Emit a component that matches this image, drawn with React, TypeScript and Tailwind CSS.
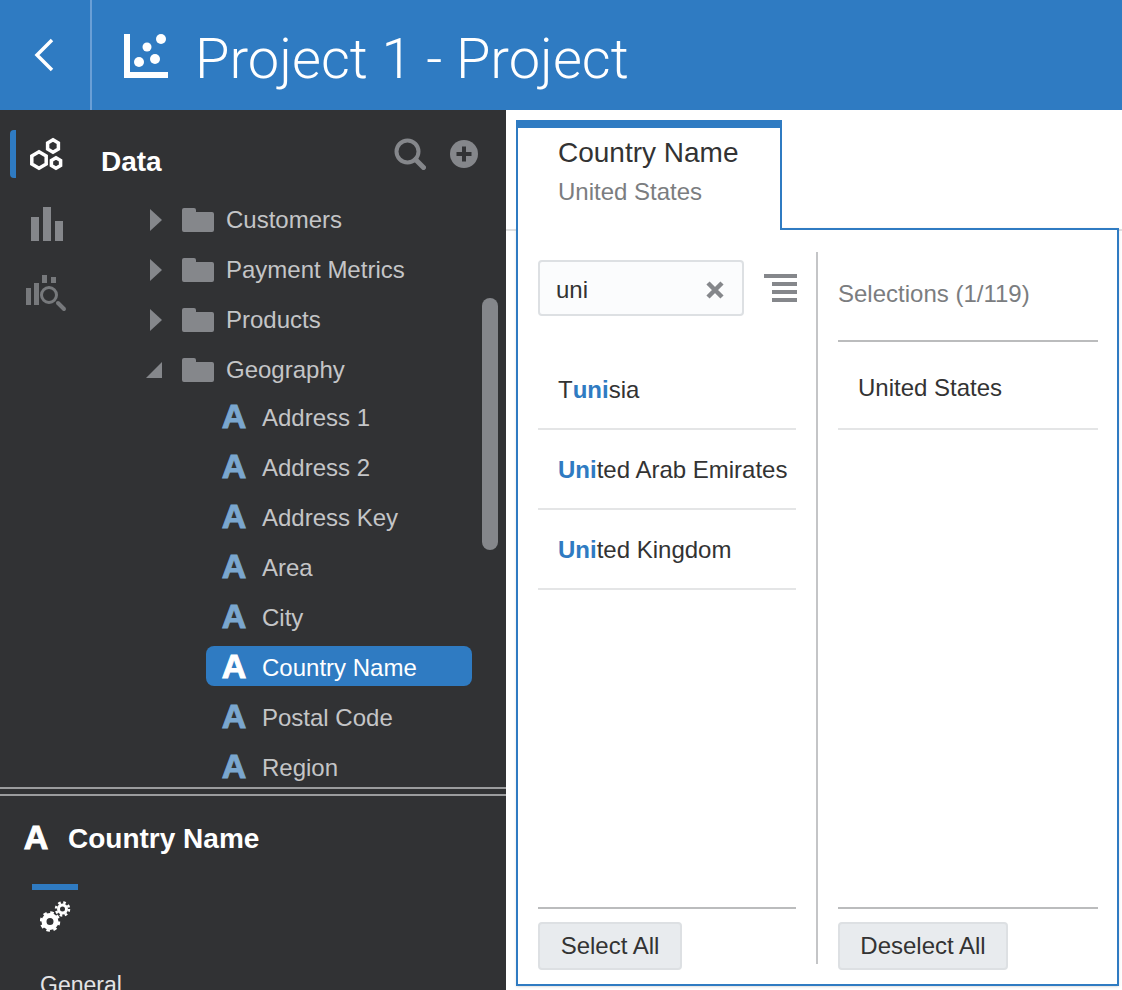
import React from 'react';

const folders = ['Customers', 'Payment Metrics', 'Products'];
const attributes = ['Address 1', 'Address 2', 'Address Key', 'Area', 'City', 'Country Name', 'Postal Code', 'Region'];

const Folder = () => (
  <svg width="32" height="24" viewBox="0 0 32 24" className="shrink-0">
    <path d="M2 0h10a2 2 0 0 1 2 2v2h16a2 2 0 0 1 2 2v16a2 2 0 0 1-2 2H2a2 2 0 0 1-2-2V2a2 2 0 0 1 2-2z" fill="#85878b" />
  </svg>
);

const AttrIcon = ({ className }: { className: string }) => (
  <span className={`-mt-1 w-[26px] shrink-0 text-center text-[34px] leading-none font-bold [-webkit-text-stroke:1px_currentColor] ${className}`}>A</span>
);

const Gear = ({ cx, cy, ring, width, teeth, dash }: { cx: number; cy: number; ring: number; width: number; teeth: number; dash: number }) => (
  <g fill="none" stroke="#fff">
    <circle cx={cx} cy={cy} r={ring} strokeWidth={width} />
    <circle cx={cx} cy={cy} r={teeth} strokeWidth={2.5} strokeDasharray={`${dash} ${dash}`} />
  </g>
);

const SelectRow = ({ children, tall }: { children: React.ReactNode; tall?: boolean }) => (
  <div className={`flex items-center border-b-2 border-[#e4e5e6] pl-5 text-2xl whitespace-nowrap text-[#333] ${tall ? 'h-[88px] pt-1.5' : 'h-20 pt-0.5'}`}>{children}</div>
);

const Hi = ({ children }: { children: React.ReactNode }) => <span className="font-bold text-[#2f7bc2]">{children}</span>;

const Sidebar = () => (
  <aside className="flex w-[506px] shrink-0 flex-col bg-[#313234]">
    <div className="flex h-[677px] overflow-hidden">
      <div className="w-[90px] shrink-0 pt-5">
        <div className="ml-2.5 flex h-12 items-center rounded-l-sm border-l-[6px] border-[#2f7bc2] pl-3.5">
          <svg width="34" height="34" viewBox="0 0 34 34" fill="none" stroke="#fff" strokeWidth="3.500">
            <path d="M23 2.750l5.400 3.150v6.200L23 15.250l-5.400-3.150V5.900z" />
            <path d="M9 14.750l7.200 4.150v8.200L9 31.250l-7.200-4.150v-8.200z" />
            <path d="M26 20.750l4.600 2.650v5.200L26 31.250l-4.600-2.650v-5.200z" />
          </svg>
        </div>
        <div className="mt-[29px] ml-[30px]">
          <svg width="34" height="34" viewBox="0 0 34 34" fill="#85878b">
            <rect x="1" y="10" width="8" height="24" />
            <rect x="13" y="0" width="8" height="34" />
            <rect x="25" y="14" width="8" height="20" />
          </svg>
        </div>
        <div className="mt-[33px] ml-[25px]">
          <svg width="42" height="38" viewBox="0 0 42 38" fill="none">
            <rect x="1" y="14" width="5" height="17" fill="#77797c" />
            <rect x="9" y="9" width="5" height="22" fill="#77797c" />
            <rect x="17" y="1" width="5" height="8" fill="#77797c" />
            <rect x="26" y="3" width="5" height="6" fill="#77797c" />
            <circle cx="24" cy="21" r="7.500" stroke="#77797c" strokeWidth="3" />
            <path d="M33 29l6 6" stroke="#77797c" strokeWidth="4" strokeLinecap="round" />
          </svg>
        </div>
      </div>
      <div className="relative min-w-0 flex-1 pt-[34px]">
        <div className="flex h-9 items-center justify-between pr-[28px] pl-[11px]">
          <span className="text-[28px] font-bold text-white">Data</span>
          <div className="-mt-4 flex items-center gap-6">
            <svg width="32" height="32" viewBox="0 0 32 32" fill="none" stroke="#85878b">
              <circle cx="13.500" cy="13.500" r="11" strokeWidth="4" />
              <path d="M21.500 21.500l8 8" strokeWidth="5" strokeLinecap="round" />
            </svg>
            <svg width="28" height="28" viewBox="0 0 28 28">
              <circle cx="14" cy="14" r="14" fill="#85878b" />
              <path d="M14 6.500v15M6.500 14h15" stroke="#313234" strokeWidth="4" />
            </svg>
          </div>
        </div>
        <div className="mt-[15px]">
          {folders.map((name) => (
            <div key={name} className="flex h-[50px] items-center pl-[60px]">
              <span className="h-0 w-0 border-y-[11px] border-l-[12px] border-y-transparent border-l-[#85878b]" />
              <span className="ml-5 flex items-center"><Folder /></span>
              <span className="ml-3 text-2xl text-[#c4c5c7]">{name}</span>
            </div>
          ))}
          <div className="flex h-[50px] items-center pl-[56px]">
            <svg width="16" height="16" viewBox="0 0 16 16" className="shrink-0"><path d="M16 0v16H0z" fill="#85878b" /></svg>
            <span className="ml-5 flex items-center"><Folder /></span>
            <span className="ml-3 text-2xl text-[#c4c5c7]">Geography</span>
          </div>
          <div className="-mt-0.5 flex flex-col">
            {attributes.map((name) =>
              name === 'Country Name' ? (
                <div key={name} className="flex h-[50px] items-start pt-[3px] pl-[116px]">
                  <div className="flex h-10 w-[266px] items-center gap-[15px] rounded-lg bg-[#2f7bc2] pt-1 pl-[15px]">
                    <AttrIcon className="text-white" />
                    <span className="text-2xl text-white">{name}</span>
                  </div>
                </div>
              ) : (
                <div key={name} className="flex h-[50px] items-center gap-[15px] pl-[131px]">
                  <AttrIcon className="text-[#7ba7cf]" />
                  <span className="text-2xl text-[#c4c5c7]">{name}</span>
                </div>
              ),
            )}
          </div>
        </div>
        <div className="absolute top-[188px] left-[392px] h-[252px] w-4 rounded-lg bg-[#85878b]" />
      </div>
    </div>
    <div className="flex-1 overflow-hidden">
      <div className="h-[9px] border-y-2 border-[#9b9c9e]" />
      <div className="flex h-[70px] items-center gap-[19px] pt-4 pl-[23px]">
        <AttrIcon className="text-white" />
        <span className="text-[28px] font-bold text-white">Country Name</span>
      </div>
      <div className="mt-[18px] ml-8 h-[6px] w-[46px] bg-[#2f7bc2]" />
      <div className="mt-[10px] ml-10">
        <svg width="32" height="32" viewBox="0 0 32 32">
          <Gear cx={10} cy={21.500} ring={6} width={5} teeth={9} dash={3.530} />
          <Gear cx={22.500} cy={9} ring={4} width={3} teeth={6.500} dash={2.550} />
        </svg>
      </div>
      <div className="mt-[36px] ml-10 text-[23px] text-[#e4e4e5]">General</div>
    </div>
  </aside>
);

const Popover = () => (
  <>
    <div className="h-[121px] border-b-2 border-[#dfe0e1] pt-2.5 pl-2.5">
      <div className="relative z-10 h-[110px] w-[266px] border-x-2 border-t-8 border-[#2f7bc2] bg-white pt-[5px] pl-10">
        <div className="text-[28px] leading-[40px] text-[#333]">Country Name</div>
        <div className="text-2xl leading-[38px] text-[#7b7d80]">United States</div>
      </div>
    </div>
    <div className="relative ml-2.5 -mt-[3px] flex h-[758px] w-[603px] border-2 border-[#2f7bc2] bg-white pt-[22px] pl-5 shadow-sm">
      <div className="flex w-[258px] flex-col">
        <div className="flex h-[98px] items-start pt-2">
          <div className="flex h-14 w-[206px] shrink-0 items-center justify-between rounded border-2 border-[#dde0e3] bg-[#fbfcfd] pt-1 pr-[18px] pl-4 text-2xl text-[#333]">
            <span>uni</span>
            <svg width="18" height="18" viewBox="0 0 18 18" stroke="#85878b" strokeWidth="4.500"><path d="M2 2l14 14M16 2L2 16" /></svg>
          </div>
          <svg width="33" height="30" viewBox="0 0 33 30" fill="#85878b" className="mt-[14px] ml-5 shrink-0">
            <rect x="0" y="0" width="33" height="4" />
            <rect x="8" y="8" width="25" height="4" />
            <rect x="8" y="16" width="25" height="4" />
            <rect x="8" y="24" width="25" height="4" />
          </svg>
        </div>
        <div className="flex-1">
          <SelectRow>T<Hi>uni</Hi>sia</SelectRow>
          <SelectRow><Hi>Uni</Hi>ted Arab Emirates</SelectRow>
          <SelectRow><Hi>Uni</Hi>ted Kingdom</SelectRow>
        </div>
        <div className="h-[77px] border-t-2 border-[#bbbcbd] pt-[13px]">
          <button className="h-12 w-36 rounded border-2 border-[#dde0e3] bg-[#e8ebee] text-2xl text-[#333]">Select All</button>
        </div>
      </div>
      <div className="mx-5 mb-5 w-0.5 bg-[#c4c5c7]" />
      <div className="flex w-[260px] flex-col">
        <div className="flex h-[90px] items-center border-b-2 border-[#bbbcbd] pb-1 text-2xl text-[#7b7d80]">Selections (1/119)</div>
        <div className="flex-1">
          <SelectRow tall>United States</SelectRow>
        </div>
        <div className="h-[77px] border-t-2 border-[#bbbcbd] pt-[13px]">
          <button className="h-12 w-[170px] rounded border-2 border-[#dde0e3] bg-[#e8ebee] text-2xl text-[#333]">Deselect All</button>
        </div>
      </div>
    </div>
  </>
);

export default function App() {
  return (
    <div className="flex h-[990px] w-[1122px] flex-col overflow-hidden bg-white font-['Liberation_Sans',sans-serif]">
      <header className="flex h-[110px] shrink-0 items-center bg-[#2f7bc2] text-white">
        <div className="flex h-full w-[92px] items-center border-r-2 border-[#6a9fd6] pl-[33px]">
          <svg width="22" height="34" viewBox="0 0 22 34" fill="none" stroke="#fff" strokeWidth="3.500">
            <path d="M19 2L4 17l15 15" />
          </svg>
        </div>
        <svg width="46" height="46" viewBox="0 0 46 46" className="mt-1 ml-[32px] shrink-0" fill="#fff">
          <path d="M0 0h6v38h38v6H0z" />
          <circle cx="15" cy="28" r="5" />
          <circle cx="23" cy="13" r="4.500" />
          <circle cx="31" cy="25" r="5" />
          <circle cx="37" cy="5" r="5" />
        </svg>
        <h1 className="mt-2 ml-[25px] font-['Roboto',sans-serif] text-[56px] font-light whitespace-nowrap">Project 1 - Project</h1>
      </header>
      <div className="flex min-h-0 flex-1">
        <Sidebar />
        <main className="min-w-0 flex-1">
          <Popover />
        </main>
      </div>
    </div>
  );
}
